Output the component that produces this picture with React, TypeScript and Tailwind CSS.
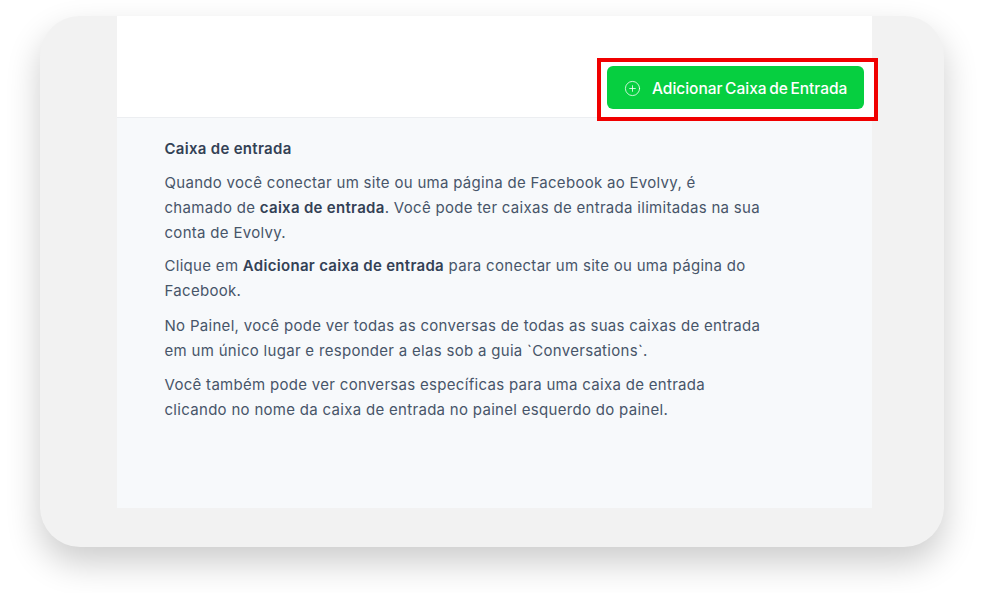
import { CirclePlus } from 'lucide-react'

const font = { fontFamily: 'Inter, "Noto Sans", sans-serif' }

export default function App() {
  return (
    <div className="h-[593px] w-[989px] overflow-hidden bg-white pl-[40px] pt-[16px]" style={font}>
      <div className="h-[531px] w-[904px] rounded-[40px] bg-[#f2f2f2] pb-[39px] pl-[77px] pr-[72px] shadow-[0_16px_34px_rgba(0,0,0,0.2)]">
        <div className="flex h-full flex-col">
          <div className="flex h-[102px] shrink-0 items-end justify-end border-b border-[#eceef1] bg-white">
            <div className="relative -mr-[6px] mb-[-4px] border-[4px] border-[#f00000] bg-white pb-[8px] pl-[6px] pr-[10px] pt-[4px]">
              <button
                type="button"
                className="flex h-[43px] w-[257px] items-center gap-[11px] rounded-[6px] bg-[#06cf40] pl-[17px] pt-[2px] text-[15.5px] font-medium tracking-[-0.02px] text-white [word-spacing:-1.5px]"
              >
                <CirclePlus className="h-[17px] w-[17px]" strokeWidth={1.1} />
                Adicionar Caixa de Entrada
              </button>
            </div>
          </div>
          <div className="flex-1 bg-[#f7f9fb] pl-[47.5px] pt-[18px] text-[15px] leading-[25px] tracking-[0.3px] text-[#475569]">
            <h4 className="font-semibold text-[#334155]">Caixa de entrada</h4>
            <p className="mt-[9px] w-[600px]">
              Quando você conectar um site ou uma página de Facebook ao Evolvy, é chamado de{' '}
              <b className="font-semibold text-[#334155]">caixa de entrada</b>. Você pode ter caixas de entrada ilimitadas na sua conta de Evolvy.
            </p>
            <p className="mt-[8px] w-[600px]">
              Clique em <b className="font-semibold text-[#334155]">Adicionar caixa de entrada</b> para conectar um site ou uma página do Facebook.
            </p>
            <p className="mt-[10px] w-[600px]">
              No Painel, você pode ver todas as conversas de todas as suas caixas de entrada em um único lugar e responder a elas sob a guia `Conversations`.
            </p>
            <p className="mt-[9px] w-[600px]">
              Você também pode ver conversas específicas para uma caixa de entrada clicando no nome da caixa de entrada no painel esquerdo do painel.
            </p>
          </div>
        </div>
      </div>
    </div>
  )
}
